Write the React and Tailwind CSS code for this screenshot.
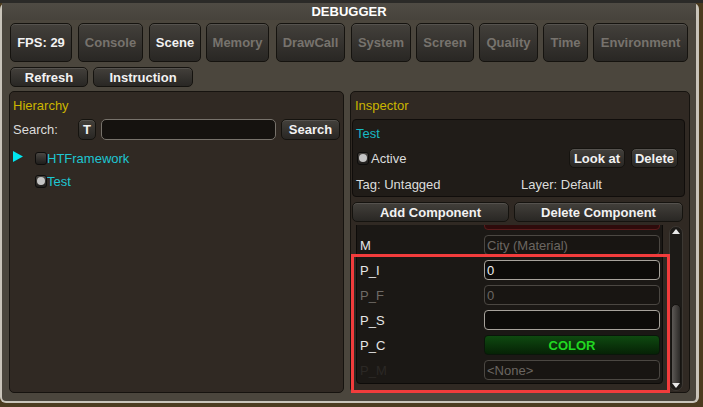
import React from "react";

const btn =
  "flex items-center justify-center rounded-[5px] border border-[#15130f] bg-linear-to-b from-[#43403b] to-[#292724] shadow-[inset_0_1px_0_rgba(255,255,255,0.10)] font-bold text-[13px] leading-none";

const tabs = [
  { t: "FPS: 29", c: "w-[62px] text-[#f2f2f2]" },
  { t: "Console", c: "ml-[6px] w-[65px] text-[#77736d]" },
  { t: "Scene", c: "ml-[6px] w-[52px] text-[#f2f2f2]" },
  { t: "Memory", c: "ml-[5px] w-[63px] text-[#77736d]" },
  { t: "DrawCall", c: "ml-[7px] w-[69px] text-[#77736d]" },
  { t: "System", c: "ml-[6px] w-[60px] text-[#77736d]" },
  { t: "Screen", c: "ml-[5px] w-[58px] text-[#77736d]" },
  { t: "Quality", c: "ml-[5px] w-[59px] text-[#77736d]" },
  { t: "Time", c: "ml-[5px] w-[45px] text-[#77736d]" },
  { t: "Environment", c: "ml-[5px] w-[95px] text-[#77736d]" },
];

function Check({ on }) {
  return (
    <div className="w-[12px] h-[13px] rounded-[3px] border border-[#0e0d0c] bg-linear-to-b from-[#4a4743] to-[#1f1d1b] flex items-center justify-center">
      {on && <div className="w-[8px] h-[8px] rounded-full bg-[#c4c4c4]" />}
    </div>
  );
}

const fieldDis =
  "h-[20px] w-[176px] rounded-[4px] border border-[#4b4742] bg-[#181512] text-[#6b6661] text-[13px] leading-none flex items-center pl-[2px]";
const fieldAct =
  "h-[20px] w-[176px] rounded-[4px] border border-[#a7a29b] bg-[#0d0b09] text-[#f0f0f0] text-[13px] leading-none flex items-center pl-[2px]";

function Row({ label, labelCls, children }) {
  return (
    <div className="flex items-center h-[20px]">
      <div className={"w-[127px] pl-[3px] text-[13px] leading-none " + labelCls}>{label}</div>
      {children}
    </div>
  );
}

export default function App() {
  return (
    <div className="relative w-[703px] h-[407px] overflow-hidden bg-[#4b3b1f] font-['Liberation_Sans',Arial,sans-serif]">
      <div className="h-[3px] bg-[#2b2a28]" />
      <div className="w-[699px] h-[400px] rounded-[6px] border-l-2 border-r-[3px] border-b-2 border-[#c9c4ba] bg-[#4b463d] flex flex-col">
        <div className="h-[17px] flex items-center justify-center text-[13px] font-bold text-white leading-none bg-linear-to-b from-[#4f4b44] to-[#47433c]">
          DEBUGGER
        </div>
        <div className="mt-[3px] h-[39px] flex pl-[8px]">
          {tabs.map((b) => (
            <div key={b.t} className={btn + " " + b.c}>
              {b.t}
            </div>
          ))}
        </div>
        <div className="mt-[5px] h-[20px] flex pl-[8px]">
          <div className={btn + " w-[78px] text-[#f2f2f2]"}>Refresh</div>
          <div className={btn + " ml-[5px] w-[100px] text-[#f2f2f2]"}>Instruction</div>
        </div>
        <div className="mt-[4px] h-[302px] flex pl-[7px]">
          {/* Hierarchy */}
          <div className="w-[335px] h-full rounded-[5px] border border-[#16130f] bg-[#302923] pt-[5px] pl-[3px] flex flex-col">
            <div className="h-[16px] flex items-center text-[13px] text-[#cbb500] leading-none">Hierarchy</div>
            <div className="mt-[6px] h-[21px] flex items-center">
              <div className="w-[65px] text-[13px] text-[#dcdcdc] leading-none">Search:</div>
              <div className={btn + " w-[18px] h-[21px] text-[#f2f2f2]"}>T</div>
              <div className="ml-[5px] w-[175px] h-[21px] rounded-[5px] border border-[#77726b] bg-[#15120f]" />
              <div className={btn + " ml-[5px] w-[59px] h-[21px] text-[#f2f2f2]"}>Search</div>
            </div>
            <div className="mt-[10px] h-[16px] flex items-center">
              <svg width="10" height="11" viewBox="0 0 10 11" className="-mt-[4px]">
                <polygon points="0,0 10,5.5 0,11" fill="#00e6f0" />
              </svg>
              <div className="ml-[12px]">
                <Check />
              </div>
              <div className="text-[13px] text-[#1ec6d2] leading-none">HTFramework</div>
            </div>
            <div className="mt-[7px] h-[16px] flex items-center">
              <div className="ml-[22px]">
                <Check on />
              </div>
              <div className="text-[13px] text-[#1ec6d2] leading-none">Test</div>
            </div>
          </div>
          {/* Inspector */}
          <div className="ml-[6px] w-[340px] h-full rounded-[5px] border border-[#16130f] bg-[#302923] pt-[5px] flex flex-col">
            <div className="pl-[4px] h-[16px] flex items-center text-[13px] text-[#cbb500] leading-none">Inspector</div>
            <div className="mt-[6px] ml-[1px] w-[333px] h-[78px] rounded-[4px] border border-[#100d0b] bg-[#201c18] flex flex-col">
              <div className="mt-[5px] pl-[3px] h-[16px] flex items-center text-[13px] text-[#17b9c3] leading-none">Test</div>
              <div className="mt-[7px] h-[20px] flex items-center pl-[4px] pr-[6px]">
                <Check on />
                <div className="ml-[2px] text-[13px] text-[#dcdcdc] leading-none">Active</div>
                <div className="flex-1" />
                <div className={btn + " w-[56px] h-[20px] text-[#f2f2f2]"}>Look at</div>
                <div className={btn + " ml-[6px] w-[47px] h-[20px] text-[#f2f2f2]"}>Delete</div>
              </div>
              <div className="mt-[8px] h-[16px] flex items-center pl-[3px] text-[13px] text-[#dcdcdc] leading-none">
                <div className="w-[165px]">Tag: Untagged</div>
                <div>Layer: Default</div>
              </div>
            </div>
            <div className="mt-[5px] ml-[1px] h-[20px] flex">
              <div className={btn + " w-[157px] text-[#f2f2f2]"}>Add Component</div>
              <div className={btn + " ml-[5px] w-[169px] text-[#f2f2f2]"}>Delete Component</div>
            </div>
            <div className="mt-[3px] h-[166px] flex">
              <div className="w-[316px] h-full overflow-hidden">
                <div className="-mt-[20px] ml-[5px] w-[307px] rounded-[4px] border border-[#0d0b09] bg-[#1b1815] pt-[4px] pb-[3px] flex flex-col gap-[5px]">
                  <div className="flex items-center h-[20px]">
                    <div className="w-[127px]" />
                    <div className="h-[20px] w-[176px] rounded-[4px] border border-[#5a1c1c] bg-[#2e0b0b]" />
                  </div>
                  <Row label="M" labelCls="text-[#e6e6e6]">
                    <div className={fieldDis}>City (Material)</div>
                  </Row>
                  <Row label="P_I" labelCls="text-[#e6e6e6]">
                    <div className={fieldAct}>0</div>
                  </Row>
                  <Row label="P_F" labelCls="text-[#6f6b66]">
                    <div className={fieldDis}>0</div>
                  </Row>
                  <Row label="P_S" labelCls="text-[#e6e6e6]">
                    <div className={fieldAct}></div>
                  </Row>
                  <Row label="P_C" labelCls="text-[#e6e6e6]">
                    <div className="h-[20px] w-[176px] rounded-[4px] border border-[#0a160a] bg-linear-to-b from-[#0f4a10] to-[#062206] text-[#21d921] font-bold text-[13px] leading-none flex items-center justify-center">
                      COLOR
                    </div>
                  </Row>
                  <Row label="P_M" labelCls="text-[#2b2825]">
                    <div className={fieldDis}>&lt;None&gt;</div>
                  </Row>
                </div>
              </div>
              <div className="ml-[2px] w-[14px] h-[165px] mt-[1px] rounded-[7px] border border-[#3c3833] bg-[#1c1a17] relative">
                <svg width="8" height="5" viewBox="0 0 8 5" className="absolute left-[2px] top-[2px]">
                  <polygon points="0,5 4,0 8,5" fill="#e8e8e8" />
                </svg>
                <div className="absolute left-[1px] top-[77px] w-[10px] h-[82px] rounded-[5px] bg-linear-to-r from-[#5c5956] via-[#45423f] to-[#2c2a28] border border-[#151310]" />
                <svg width="8" height="5" viewBox="0 0 8 5" className="absolute left-[2px] bottom-[2px]">
                  <polygon points="0,0 8,0 4,5" fill="#e8e8e8" />
                </svg>
              </div>
            </div>
          </div>
        </div>
      </div>
      <div className="absolute left-[351px] top-[254px] w-[319px] h-[139px] border-[3px] border-[#f23c3c]" />
    </div>
  );
}
